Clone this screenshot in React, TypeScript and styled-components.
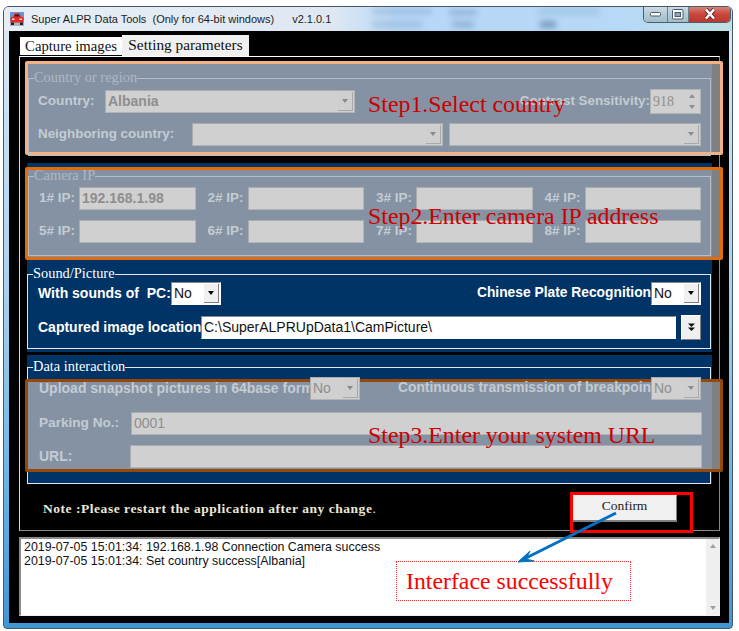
import React from 'react';
import styled, { createGlobalStyle } from 'styled-components';

const sans = '"Liberation Sans", Arial, sans-serif';
const serif = '"Liberation Serif", "Times New Roman", serif';

const GlobalStyle = createGlobalStyle`
  html, body {
    margin: 0;
    padding: 0;
    background: #fff;
  }
  * {
    box-sizing: border-box;
  }
`;

const Window = styled.div`
  position: relative;
  width: 730px;
  height: 623px;
  margin: 6px 0 0 3px;
  border: 1px solid #44586a;
  border-radius: 6px 6px 4px 4px;
  background: linear-gradient(180deg, #dfe9f3 0%, #a9d2f0 45%, #6cb6e6 75%, #3f97d4 100%);
  overflow: hidden;
`;

const TitleBar = styled.div`
  position: relative;
  display: flex;
  align-items: center;
  height: 24px;
  padding-left: 6px;
  background: linear-gradient(90deg, #e6edf4 0%, #dfe8f2 45%, #b7d8f8 54%, #b6d9f6 86%, #bfe0e2 100%);
  font-family: ${sans};
  font-size: 11px;
  color: #1c1c1c;
`;

const Blur = styled.span<{ $left: number; $top: number; $w: number; $op: number }>`
  position: absolute;
  left: ${(p) => p.$left}px;
  top: ${(p) => p.$top}px;
  width: ${(p) => p.$w}px;
  height: 5px;
  background: #3c5f86;
  opacity: ${(p) => p.$op};
  filter: blur(3px);
`;

const AppIcon = styled.svg`
  width: 14px;
  height: 14px;
  margin-right: 7px;
  flex: none;
`;

const TitleText = styled.span`
  white-space: pre;
`;

const Version = styled.span`
  margin-left: 18px;
`;

const Controls = styled.div`
  position: absolute;
  top: -1px;
  right: 1px;
  display: flex;
  height: 17px;
  border: 1px solid #4f5d6b;
  border-top: none;
  border-radius: 0 0 5px 5px;
  overflow: hidden;
`;

const ControlBtn = styled.div<{ $w: number; $close?: boolean }>`
  display: flex;
  align-items: center;
  justify-content: center;
  width: ${(p) => p.$w}px;
  border-right: 1px solid #6d7d8c;
  background: ${(p) =>
    p.$close
      ? 'linear-gradient(180deg, #d98a80 0%, #c9483c 50%, #b73a30 100%)'
      : 'linear-gradient(180deg, #cfdde6 0%, #b7cbd8 50%, #a3bccb 100%)'};
  &:last-child {
    border-right: none;
  }
`;

const Client = styled.div`
  position: relative;
  height: 592px;
  margin: 0 3px 0 5px;
  padding: 4px 9px 0 10px;
  background: #000;
`;

const Tabs = styled.div`
  display: flex;
  align-items: flex-end;
  height: 21px;
`;

const Tab = styled.div<{ $active?: boolean }>`
  display: flex;
  align-items: center;
  justify-content: center;
  margin-left: ${(p) => (p.$active ? 0 : 1)}px;
  padding-bottom: ${(p) => (p.$active ? 2 : 0)}px;
  width: ${(p) => (p.$active ? 127 : 102)}px;
  height: ${(p) => (p.$active ? 21 : 19)}px;
  background: ${(p) => (p.$active ? '#f0f0f0' : '#fff')};
  border-bottom: ${(p) => (p.$active ? 'none' : '1px solid #000')};
  font-family: ${serif};
  font-size: ${(p) => (p.$active ? 15.3 : 14.7)}px;
  color: #111;
`;

const Panel = styled.div`
  height: 475px;
  padding: 4px 7px 0;
  border: 1px solid #8a8a8a;
  border-top-color: #fff;
  border-left-color: #d8d8d8;
  background: #000;
`;

const Section = styled.section<{ $h: number; $mt: number }>`
  height: ${(p) => p.$h}px;
  margin-top: ${(p) => p.$mt}px;
  padding-top: 4px;
  background: #003366;
`;

const Callout = styled.div<{ $color: string; $h: number; $inset?: boolean }>`
  position: relative;
  width: 698px;
  height: ${(p) => p.$h}px;
  margin-left: ${(p) => (p.$inset ? -3 : -2)}px;
  margin-top: ${(p) => (p.$inset ? 4 : 0)}px;
  border: 3px solid ${(p) => p.$color};
  border-radius: 2px;
  background: #8492a3;

  &::after {
    content: '';
    position: absolute;
    top: 0;
    right: 0;
    bottom: 0;
    width: 8px;
    background: #808080;
  }
`;

const Step = styled.div<{ $top: number }>`
  position: absolute;
  z-index: 2;
  left: 340px;
  top: ${(p) => p.$top}px;
  font-family: ${serif};
  font-size: 23.85px;
  line-height: 28px;
  color: #cc0000;
  white-space: nowrap;
`;

const Group = styled.fieldset<{ $h: number; $mt?: number; $muted?: boolean; $w?: number }>`
  display: block;
  width: ${(p) => p.$w ?? 684}px;
  height: ${(p) => p.$h}px;
  min-width: 0;
  margin: ${(p) => p.$mt ?? 0}px 0 0;
  padding: 0;
  border: 1.5px solid ${(p) => (p.$muted ? '#b4bec8' : '#e3e8ee')};
`;

const Legend = styled.legend<{ $muted?: boolean }>`
  height: 16px;
  margin-left: 5px;
  padding: 0;
  font-family: ${serif};
  font-size: 14.4px;
  line-height: 15px;
  color: ${(p) => (p.$muted ? '#aeb9c4' : '#fff')};
`;

const Row = styled.div<{ $pt: number; $pl?: number; $pr?: number; $h?: number }>`
  display: flex;
  align-items: center;
  height: ${(p) => p.$h ?? 23}px;
  margin-top: ${(p) => p.$pt}px;
  padding: 0 ${(p) => p.$pr ?? 9}px 0 ${(p) => p.$pl ?? 9}px;
`;

const Label = styled.label<{ $w?: number; $muted?: boolean; $right?: boolean; $size?: number }>`
  flex: none;
  width: ${(p) => (p.$w ? `${p.$w}px` : 'auto')};
  margin-left: ${(p) => (p.$right ? 'auto' : 0)};
  padding-bottom: 2px;
  font-family: ${sans};
  font-size: ${(p) => p.$size ?? 14}px;
  font-weight: 700;
  color: ${(p) => (p.$muted ? '#c4ccd3' : '#fff')};
  white-space: pre;
`;

const Field = styled.div<{ $w?: number; $h?: number; $muted?: boolean }>`
  flex: ${(p) => (p.$w ? 'none' : 1)};
  display: flex;
  align-items: center;
  width: ${(p) => (p.$w ? `${p.$w}px` : 'auto')};
  height: ${(p) => p.$h ?? 23}px;
  padding: 0 0 2px 2px;
  border: 1px solid ${(p) => (p.$muted ? '#b2b5b8' : '#fff')};
  border-top-color: ${(p) => (p.$muted ? '#a9acaf' : '#8a8a8a')};
  border-left-color: ${(p) => (p.$muted ? '#a9acaf' : '#8a8a8a')};
  background: ${(p) => (p.$muted ? '#d0d0d0' : '#fff')};
  font-family: ${sans};
  font-size: 14px;
  color: ${(p) => (p.$muted ? '#8e8e8e' : '#111')};
  white-space: nowrap;
  overflow: hidden;
`;

const FieldValue = styled.span<{ $bold?: boolean }>`
  flex: 1;
  font-weight: ${(p) => (p.$bold ? 700 : 400)};
`;

const DropBtn = styled.span<{ $muted?: boolean }>`
  display: flex;
  align-items: center;
  justify-content: center;
  flex: none;
  width: 15px;
  height: 19px;
  margin: 2px 1px 0 0;
  background: ${(p) => (p.$muted ? '#cfcfcf' : '#f0f0f0')};
  border-right: 1px solid ${(p) => (p.$muted ? '#a8a8a8' : '#808080')};
  border-bottom: 1px solid ${(p) => (p.$muted ? '#a8a8a8' : '#808080')};
  &::before {
    content: '';
    border: 3px solid transparent;
    border-top: 4px solid ${(p) => (p.$muted ? '#8a8a8a' : '#000')};
    border-bottom: none;
  }
`;

const Spinner = styled.div`
  flex: none;
  display: flex;
  align-items: center;
  width: 51px;
  height: 25px;
  padding-left: 2px;
  border: 1px solid #b2b5b8;
  background: #d0d0d0;
  font-family: ${serif};
  font-size: 14px;
  color: #8e8e8e;
`;

const SpinBtns = styled.span`
  display: flex;
  flex-direction: column;
  gap: 1px;
  margin-left: auto;
  margin-right: 1px;
`;

const SpinBtn = styled.span<{ $up?: boolean }>`
  display: flex;
  align-items: center;
  justify-content: center;
  width: 14px;
  height: 10px;
  &::before {
    content: '';
    border: 3px solid transparent;
    ${(p) => (p.$up ? 'border-bottom: 4px solid #909090; border-top: none;' : 'border-top: 4px solid #909090; border-bottom: none;')}
  }
`;

const IpGrid = styled.div<{ $pt: number }>`
  display: grid;
  grid-template-columns: repeat(4, 168.5px);
  margin-top: ${(p) => p.$pt}px;
  padding-left: 10px;
`;

const IpCell = styled.div`
  display: flex;
  align-items: center;
  width: 156.5px;
`;

const BrowseBtn = styled.button`
  flex: none;
  display: flex;
  align-items: center;
  justify-content: center;
  width: 20px;
  height: 25px;
  margin-left: 5px;
  padding: 0;
  border: 1px solid #fff;
  border-right-color: #808080;
  border-bottom-color: #808080;
  background: #f0f0f0;
`;

const NoteRow = styled.div`
  display: flex;
  align-items: center;
  height: 27px;
  margin-top: 11px;
  padding-left: 16px;
`;

const Note = styled.div`
  font-family: ${serif};
  font-size: 13.5px;
  color: #ece8d8;
  letter-spacing: 0.53px;
  white-space: pre;
`;

const NoteBold = styled.b`
  font-weight: 700;
`;

const ConfirmWrap = styled.div`
  position: relative;
  margin-left: auto;
  margin-right: 35px;
`;

const ConfirmBtn = styled.button`
  display: block;
  width: 105px;
  height: 27px;
  padding: 0 0 5px;
  border: 1px solid #f0f0f0;
  border-right: 1px solid #808080;
  border-bottom: 2px solid #808080;
  background: #f0f0f0;
  font-family: ${serif};
  font-size: 13.5px;
  color: #222;
`;

const RedBox = styled.div`
  position: absolute;
  left: -2px;
  top: -3px;
  width: 123px;
  height: 41px;
  border: 3px solid #ff0000;
`;

const Log = styled.div`
  position: relative;
  display: flex;
  height: 79px;
  margin-top: 6px;
  border: 1px solid #f0f0f0;
  border-top: 2px solid #8a8a8a;
  border-left: 2px solid #8a8a8a;
  background: #fff;
`;

const LogText = styled.div`
  flex: 1;
  padding: 1px 0 0 3px;
  font-family: ${sans};
  font-size: 12.4px;
  line-height: 14px;
  color: #111;
`;

const Scrollbar = styled.div`
  flex: none;
  display: flex;
  flex-direction: column;
  align-items: center;
  justify-content: space-between;
  width: 13px;
  padding: 5px 0;
  background: #efefef;
`;

const ScrollArrow = styled.span<{ $up?: boolean }>`
  border: 3px solid transparent;
  ${(p) => (p.$up ? 'border-bottom: 4px solid #a0a0a0; border-top: none;' : 'border-top: 4px solid #a0a0a0; border-bottom: none;')}
`;

const SuccessBox = styled.div`
  position: absolute;
  left: 375px;
  top: 22px;
  display: flex;
  align-items: center;
  width: 235px;
  height: 40px;
  padding-left: 9px;
  border: 1px dotted #f03030;
  background: #fff;
  font-family: ${serif};
  font-size: 23.8px;
  color: #ff0000;
  white-space: nowrap;
`;

const ArrowSvg = styled.svg`
  position: absolute;
  left: 501px;
  top: 474px;
  z-index: 3;
  width: 115px;
  height: 65px;
`;

const Select = ({ w, value, muted }: { w: number; value?: string; muted?: boolean }) => (
  <Field $w={w} $muted={muted}>
    <FieldValue $bold={muted && value === 'Albania'}>{value}</FieldValue>
    <DropBtn $muted={muted} />
  </Field>
);

const ips = ['1#', '2#', '3#', '4#', '5#', '6#', '7#', '8#'];

export default function App() {
  return (
    <>
      <GlobalStyle />
      <Window>
        <TitleBar>
          <AppIcon viewBox="0 0 14 14">
            <rect x="0" y="0" width="14" height="8" fill="#6f93cf" />
            <rect x="0" y="8" width="14" height="6" fill="#aab4c4" />
            <path d="M3 5 L4.5 1.5 H9.5 L11 5 Z" fill="#c8282a" />
            <path d="M4.6 4.6 L5.2 2.6 H8.8 L9.4 4.6 Z" fill="#4a1518" />
            <path d="M0.5 6 Q1 4.8 3 4.8 H11 Q13 4.8 13.5 6 V10.5 H0.5 Z" fill="#e02a2c" />
            <rect x="2" y="6.5" width="2.5" height="1.5" fill="#f5e6a8" />
            <rect x="9.5" y="6.5" width="2.5" height="1.5" fill="#f5e6a8" />
            <rect x="1" y="10.5" width="3" height="2.5" fill="#222" />
            <rect x="10" y="10.5" width="3" height="2.5" fill="#222" />
          </AppIcon>
          <TitleText>Super ALPR Data Tools  (Only for 64-bit windows)</TitleText>
          <Version>v2.1.0.1</Version>
          <Blur $left={368} $top={2} $w={60} $op={0.25} />
          <Blur $left={368} $top={15} $w={50} $op={0.25} />
          <Blur $left={445} $top={3} $w={28} $op={0.35} />
          <Blur $left={448} $top={15} $w={22} $op={0.4} />
          <Blur $left={535} $top={2} $w={60} $op={0.2} />
          <Blur $left={536} $top={15} $w={16} $op={0.7} />
          <Controls>
            <ControlBtn $w={24}>
              <svg width="12" height="6" viewBox="0 0 12 6">
                <rect x="0.5" y="1.5" width="10" height="3.5" rx="1" fill="#fff" stroke="#4a5a6a" />
              </svg>
            </ControlBtn>
            <ControlBtn $w={21}>
              <svg width="12" height="11" viewBox="0 0 12 11">
                <rect x="0.5" y="0.5" width="10.5" height="9.5" rx="1" fill="#fff" stroke="#4a5a6a" />
                <rect x="3" y="3.5" width="5.5" height="4" fill="#8ea3b5" stroke="#4a5a6a" />
              </svg>
            </ControlBtn>
            <ControlBtn $w={41} $close>
              <svg width="14" height="12" viewBox="0 0 14 12">
                <path d="M3 1.5 L11 10.5 M11 1.5 L3 10.5" stroke="#5a2a2a" strokeWidth="4.2" />
                <path d="M3 1.5 L11 10.5 M11 1.5 L3 10.5" stroke="#fff" strokeWidth="2.6" />
              </svg>
            </ControlBtn>
          </Controls>
        </TitleBar>

        <Client>
          <Tabs>
            <Tab>Capture images</Tab>
            <Tab $active>Setting parameters</Tab>
          </Tabs>

          <Panel>
            <Callout $color="#f4b183" $h={94}>
              <Step $top={26}>Step1.Select country</Step>
              <Group $muted $h={86} $mt={6} $w={683}>
                <Legend $muted>Country or region</Legend>
                <Row $pt={4}>
                  <Label $muted $w={67} $size={13.6}>Country:</Label>
                  <Select muted w={250} value="Albania" />
                  <Label $muted $right $size={13.4}>Contrast Sensitivity:</Label>
                  <Spinner>
                    918
                    <SpinBtns>
                      <SpinBtn $up />
                      <SpinBtn />
                    </SpinBtns>
                  </Spinner>
                </Row>
                <Row $pt={10}>
                  <Label $muted $w={154} $size={13.4}>Neighboring country:</Label>
                  <Select muted w={251} />
                  <Label $muted $w={6} />
                  <Select muted w={252} />
                </Row>
              </Group>
            </Callout>

            <Section $h={189} $mt={8}>
              <Callout $color="#e36c0a" $h={93}>
                <Step $top={32}>Step2.Enter camera IP address</Step>
                <Group $muted $h={88} $mt={-2} $w={683}>
                  <Legend $muted>Camera IP</Legend>
                  <IpGrid $pt={3}>
                    {ips.slice(0, 4).map((n, i) => (
                      <IpCell key={n}>
                        <Label $muted $w={40} $size={13.5}>{n} IP:</Label>
                        <Field $muted>
                          <FieldValue $bold>{i === 0 ? '192.168.1.98' : ''}</FieldValue>
                        </Field>
                      </IpCell>
                    ))}
                  </IpGrid>
                  <IpGrid $pt={10}>
                    {ips.slice(4).map((n) => (
                      <IpCell key={n}>
                        <Label $muted $w={40} $size={13.5}>{n} IP:</Label>
                        <Field $muted />
                      </IpCell>
                    ))}
                  </IpGrid>
                </Group>
              </Callout>

              <Group $h={83} $mt={6}>
                <Legend>Sound/Picture</Legend>
                <Row $pt={0} $pl={10}>
                  <Label $w={133}>{'With sounds of  PC:'}</Label>
                  <Select w={50} value="No" />
                  <Label $right $size={13.8}>Chinese Plate Recognition</Label>
                  <Select w={50} value="No" />
                </Row>
                <Row $pt={10} $h={25} $pl={10}>
                  <Label $w={163}>Captured image location</Label>
                  <Field $w={475}>C:\SuperALPRUpData1\CamPicture\</Field>
                  <BrowseBtn>
                    <svg width="9" height="9" viewBox="0 0 9 9">
                      <path d="M1 0.5 H8 L4.5 4 Z M1 4.5 H8 L4.5 8 Z" fill="#111" />
                    </svg>
                  </BrowseBtn>
                </Row>
              </Group>
            </Section>

            <Section $h={129} $mt={3}>
              <Group $h={125}>
                <Legend>Data interaction</Legend>
                <Callout $inset $color="#984806" $h={93}>
                  <Step $top={39}>Step3.Enter your system URL</Step>
                  <Row $pt={-5} $pl={11} $pr={19}>
                    <Label $muted $w={271}>Upload snapshot pictures in 64base form</Label>
                    <Select muted w={50} value="No" />
                    <Label $muted $right $size={13.8}>Continuous transmission of breakpoin</Label>
                    <Select muted w={50} value="No" />
                  </Row>
                  <Row $pt={12} $pl={11} $pr={18}>
                    <Label $muted $w={92} $size={13.6}>Parking No.:</Label>
                    <Field $muted>0001</Field>
                  </Row>
                  <Row $pt={10} $pl={11} $pr={18}>
                    <Label $muted $w={91}>URL:</Label>
                    <Field $muted />
                  </Row>
                </Callout>
              </Group>
            </Section>

            <NoteRow>
              <Note>
                <NoteBold>Note :Please restart the application after any change</NoteBold>.
              </Note>
              <ConfirmWrap>
                <ConfirmBtn>Confirm</ConfirmBtn>
                <RedBox />
              </ConfirmWrap>
            </NoteRow>
          </Panel>

          <Log>
            <LogText>
              <div>2019-07-05 15:01:34: 192.168.1.98 Connection Camera success</div>
              <div>2019-07-05 15:01:34: Set country success[Albania]</div>
            </LogText>
            <Scrollbar>
              <ScrollArrow $up />
              <ScrollArrow />
            </Scrollbar>
            <SuccessBox>Interface successfully</SuccessBox>
          </Log>

          <ArrowSvg viewBox="0 0 115 65">
            <path d="M106 8 L12 55" stroke="#0070c0" strokeWidth="3" fill="none" />
            <path d="M8 57 L20 46 L16 54 L24 56 Z" fill="#0070c0" stroke="#0070c0" strokeWidth="1" />
          </ArrowSvg>
        </Client>
      </Window>
    </>
  );
}
